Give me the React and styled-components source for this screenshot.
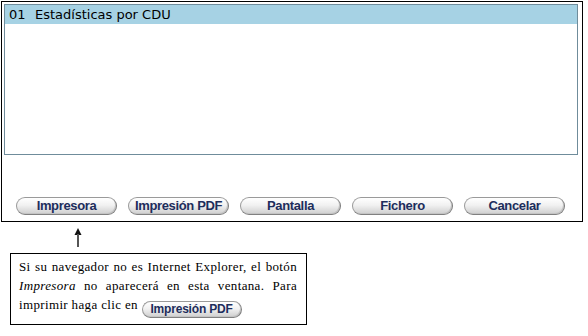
import React from "react";
import styled, { createGlobalStyle } from "styled-components";

const Global = createGlobalStyle`
  html, body { margin: 0; padding: 0; background: #fff; }
  body { width: 588px; height: 336px; overflow: hidden; }
`;

const Page = styled.div`
  padding: 1px 0 0 1px;
  display: flex;
  flex-direction: column;
  align-items: flex-start;
`;

const Frame = styled.div`
  width: 582px;
  height: 221px;
  border: 1px solid #000;
  box-sizing: border-box;
  padding: 2px;
  display: flex;
  flex-direction: column;
`;

const ListBox = styled.div`
  height: 151px;
  box-sizing: border-box;
  border: 1px solid #6f8c9b;
  margin-right: 2px;
  background: #fff;
`;

const Row = styled.div`
  height: 19px;
  background: ${(p) => (p.$selected ? "#a6d2e4" : "transparent")};
  font-family: "DejaVu Sans", Verdana, sans-serif;
  font-size: 13px;
  line-height: 19px;
  color: #000;
  padding-left: 4px;
  white-space: pre;
`;

const Code = styled.span`
  display: inline-block;
  width: 26px;
`;

const ButtonBar = styled.div`
  display: flex;
  gap: 11px;
  padding: 42px 0 0 12px;
`;

const PillButton = styled.button`
  width: 101px;
  height: 18px;
  box-sizing: border-box;
  border: 1px solid #9a9a9a;
  border-right-color: #7d7d7d;
  border-bottom-color: #808080;
  border-radius: 9px;
  background: linear-gradient(#ffffff 0%, #f1f1f1 45%, #dedede 75%, #cfcfcf 100%);
  box-shadow: inset -1px -1px 0 #c4c4c4;
  font-family: "Liberation Sans", Arial, sans-serif;
  font-weight: bold;
  font-size: 13px;
  letter-spacing: -0.35px;
  color: #1d2d5c;
  padding: 0;
  line-height: 16px;
  display: inline-flex;
  align-items: center;
  justify-content: center;
`;

const ArrowWrap = styled.div`
  margin: 6px 0 0 73px;
  height: 20px;
  line-height: 0;
`;

const Note = styled.div`
  margin: 5px 0 0 9px;
  width: 297px;
  box-sizing: border-box;
  border: 1px solid #000;
  padding: 3px 9px 6px 8px;
  font-family: "Liberation Serif", "Times New Roman", serif;
  font-size: 13px;
  letter-spacing: 0.35px;
  line-height: 19px;
  color: #000;
  text-align: justify;
`;

const InlineButton = styled(PillButton)`
  vertical-align: -4px;
  width: 100px;
  height: 17px;
  font-size: 12px;
  letter-spacing: -0.2px;
  line-height: 15px;
`;

export default function App() {
  return (
    <>
      <Global />
      <Page>
        <Frame>
          <ListBox>
            <Row $selected>
              <Code>01</Code>Estadísticas por CDU
            </Row>
          </ListBox>
          <ButtonBar>
            <PillButton>Impresora</PillButton>
            <PillButton>Impresión PDF</PillButton>
            <PillButton>Pantalla</PillButton>
            <PillButton>Fichero</PillButton>
            <PillButton>Cancelar</PillButton>
          </ButtonBar>
        </Frame>
        <ArrowWrap>
          <svg width="8" height="20" viewBox="0 0 8 20">
            <polygon points="4,0 7.5,7 0.5,7" fill="#111" />
            <rect x="3" y="6" width="2" height="13" fill="#555" />
          </svg>
        </ArrowWrap>
        <Note>
          Si su navegador no es Internet Explorer, el botón <i>Impresora</i> no
          aparecerá en esta ventana. Para imprimir haga clic en{" "}
          <InlineButton>Impresión PDF</InlineButton>
        </Note>
      </Page>
    </>
  );
}
